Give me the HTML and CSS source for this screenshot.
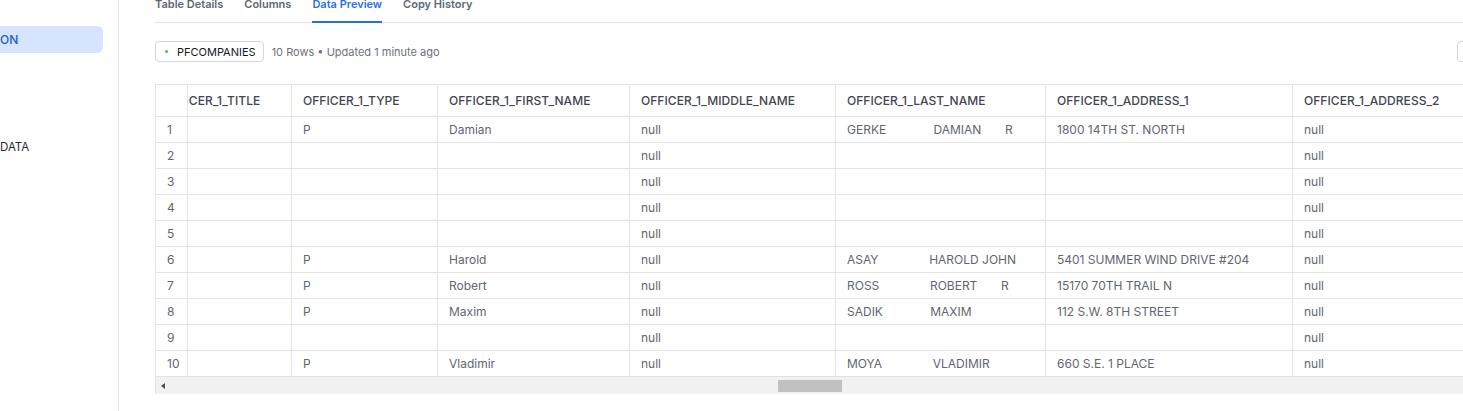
FILE: index.html
```html
<!DOCTYPE html>
<html>
<head>
<meta charset="utf-8">
<link rel="stylesheet" href="styles.css">
</head>
<body>
<div class="app">
  <aside class="sidebar">
    <div class="nav-item active">ON</div>
    <div class="nav-item plain">DATA</div>
  </aside>
  <main class="main">
    <nav class="tabs">
      <span class="tab">Table Details</span>
      <span class="tab">Columns</span>
      <span class="tab active">Data Preview</span>
      <span class="tab">Copy History</span>
    </nav>
    <div class="toolbar">
      <span class="chip"><span class="dot"></span>PFCOMPANIES</span>
      <span class="meta">10 Rows • Updated 1 minute ago</span>
      <span class="spacer"></span>
      <button class="edge-btn"></button>
    </div>
    <div class="grid-wrap">
      <table class="grid">
        <colgroup>
          <col class="c-num"><col class="c-title"><col class="c-type"><col class="c-first"><col class="c-middle"><col class="c-last"><col class="c-addr1"><col class="c-addr2">
        </colgroup>
        <thead>
          <tr>
            <th></th>
            <th class="clip"><span class="shift">OFFICER_1_TITLE</span></th>
            <th>OFFICER_1_TYPE</th>
            <th>OFFICER_1_FIRST_NAME</th>
            <th>OFFICER_1_MIDDLE_NAME</th>
            <th>OFFICER_1_LAST_NAME</th>
            <th>OFFICER_1_ADDRESS_1</th>
            <th>OFFICER_1_ADDRESS_2</th>
          </tr>
        </thead>
        <tbody>
          <tr><td>1</td><td></td><td>P</td><td>Damian</td><td>null</td><td class="pre">GERKE              DAMIAN       R</td><td>1800 14TH ST. NORTH</td><td>null</td></tr>
          <tr><td>2</td><td></td><td></td><td></td><td>null</td><td></td><td></td><td>null</td></tr>
          <tr><td>3</td><td></td><td></td><td></td><td>null</td><td></td><td></td><td>null</td></tr>
          <tr><td>4</td><td></td><td></td><td></td><td>null</td><td></td><td></td><td>null</td></tr>
          <tr><td>5</td><td></td><td></td><td></td><td>null</td><td></td><td></td><td>null</td></tr>
          <tr><td>6</td><td></td><td>P</td><td>Harold</td><td>null</td><td class="pre">ASAY               HAROLD JOHN</td><td>5401 SUMMER WIND DRIVE #204</td><td>null</td></tr>
          <tr><td>7</td><td></td><td>P</td><td>Robert</td><td>null</td><td class="pre">ROSS               ROBERT       R</td><td>15170 70TH TRAIL N</td><td>null</td></tr>
          <tr><td>8</td><td></td><td>P</td><td>Maxim</td><td>null</td><td class="pre">SADIK              MAXIM</td><td>112 S.W. 8TH STREET</td><td>null</td></tr>
          <tr><td>9</td><td></td><td></td><td></td><td>null</td><td></td><td></td><td>null</td></tr>
          <tr><td>10</td><td></td><td>P</td><td>Vladimir</td><td>null</td><td class="pre">MOYA               VLADIMIR</td><td>660 S.E. 1 PLACE</td><td>null</td></tr>
        </tbody>
      </table>
      <div class="hscroll">
        <span class="arrow"></span>
        <span class="thumb"></span>
      </div>
    </div>
  </main>
</div>
</body>
</html>
```

FILE: styles.css
```css
html, body {
  margin: 0;
  padding: 0;
  overflow: hidden;
  background: #ffffff;
}
body {
  font-family: Inter, "Noto Sans", sans-serif;
  color: #1f2937;
}
.app {
  display: flex;
  width: 1463px;
  height: 411px;
  overflow: hidden;
}
.sidebar {
  width: 119px;
  flex: none;
  border-right: 1px solid #e5e7eb;
  padding-top: 26px;
  box-sizing: border-box;
}
.nav-item {
  height: 27px;
  display: flex;
  align-items: center;
  font-size: 12px;
  width: 103px;
  box-sizing: border-box;
  border-radius: 0 6px 6px 0;
}
.nav-item.active {
  background: #d6e5fd;
  color: #1b5fd0;
  font-weight: 500;
}
.nav-item.plain {
  margin-top: 80px;
  color: #1f2937;
  font-size: 11.5px;
}
.main {
  flex: 1;
  min-width: 0;
  padding-left: 36px;
  overflow: hidden;
}
.tabs {
  display: flex;
  gap: 21px;
  margin-top: -4px;
  border-bottom: 1px solid #dfe3ea;
  margin-right: -40px;
}
.tab {
  font-size: 11px;
  line-height: 16px;
  font-weight: 600;
  color: #5d6778;
  padding-bottom: 9px;
  border-bottom: 2px solid transparent;
  margin-bottom: -1px;
}
.tab.active {
  color: #2d6fe0;
  border-bottom-color: #2d6fe0;
}
.toolbar {
  display: flex;
  align-items: center;
  margin-top: 18px;
  height: 21px;
}
.chip {
  display: inline-flex;
  align-items: center;
  height: 21px;
  box-sizing: border-box;
  border: 1px solid #d3d7de;
  border-radius: 4px;
  padding: 0 7px 0 9px;
  font-size: 11px;
  font-weight: 400;
  color: #111827;
}
.dot {
  width: 3px;
  height: 3px;
  border-radius: 50%;
  background: #3cb878;
  margin-right: 9px;
}
.meta {
  margin-left: 8px;
  font-size: 11px;
  color: #6b7280;
}
.spacer { flex: 1; }
.edge-btn {
  width: 40px;
  height: 21px;
  border: 1px solid #d3d7de;
  border-radius: 4px;
  background: #fff;
  margin-right: -34px;
  padding: 0;
  flex: none;
}
.grid-wrap {
  margin-top: 22px;
  border-top: 1px solid #e3e3e3;
  border-left: 1px solid #e3e3e3;
  width: 1500px;
}
.grid {
  border-collapse: separate;
  border-spacing: 0;
  table-layout: fixed;
  width: 1359px;
}
.c-num { width: 32px; }
.c-title { width: 104px; }
.c-type { width: 146px; }
.c-first { width: 192px; }
.c-middle { width: 206px; }
.c-last { width: 210px; }
.c-addr1 { width: 247px; }
.c-addr2 { width: 222px; }
.grid th, .grid td {
  box-sizing: border-box;
  border-right: 1px solid #e3e3e3;
  border-bottom: 1px solid #e3e3e3;
  padding: 0 11px;
  text-align: left;
  white-space: nowrap;
  overflow: hidden;
}
.grid th {
  height: 32px;
  font-size: 12px;
  font-weight: 500;
  letter-spacing: 0.05px;
  color: #3f4652;
}
.grid td {
  height: 26px;
  font-size: 12px;
  color: #5f6670;
}
.grid .pre { white-space: pre; }
.grid th.clip { padding: 0; }
.shift { display: inline-block; margin-left: -26px; }
.hscroll {
  display: flex;
  align-items: center;
  height: 17px;
  background: #f1f1f1;
}
.arrow {
  width: 0;
  height: 0;
  border-top: 3.5px solid transparent;
  border-bottom: 3.5px solid transparent;
  border-right: 4px solid #505050;
  margin-left: 5px;
}
.thumb {
  width: 64px;
  height: 12px;
  background: #c1c1c1;
  margin-left: 613px;
}
```
